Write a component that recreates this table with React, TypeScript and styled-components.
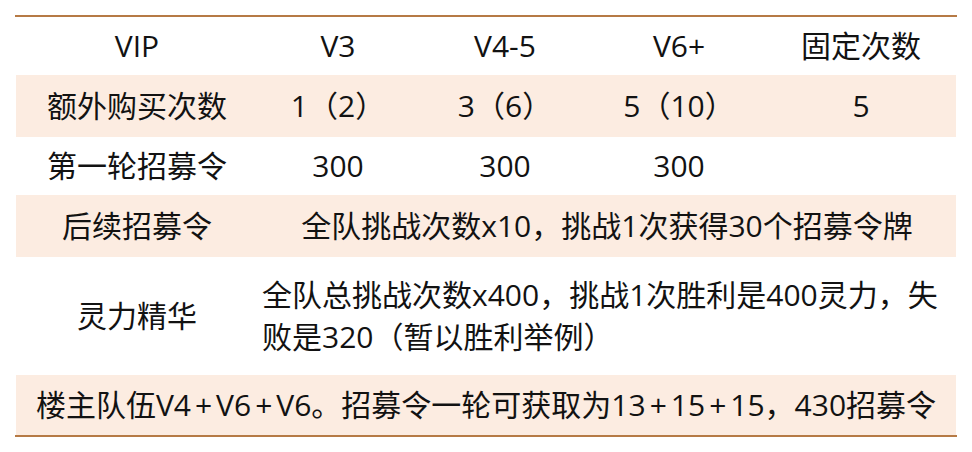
import React from "react";
import styled, { createGlobalStyle } from "styled-components";

const Global = createGlobalStyle`
  html, body { margin: 0; padding: 0; background: #ffffff; }
  body { font-family: "Open Sans", "Noto Sans CJK SC", sans-serif; }
`;

const Page = styled.div`
  width: 972px;
  height: 452px;
  padding: 15px 15px 0 15px;
  box-sizing: border-box;
`;

const Table = styled.div`
  width: 942px;
  border-top: 2px solid #b67a45;
  border-bottom: 2px solid #b67a45;
  padding: 0 1px;
  box-sizing: border-box;
  display: flex;
  flex-direction: column;
`;

const Row = styled.div<{ $shaded?: boolean; $h: number }>`
  display: grid;
  grid-template-columns: 242px 160px 174px 174px 190px;
  height: ${(p) => p.$h}px;
  background: ${(p) => (p.$shaded ? "#fcece1" : "#ffffff")};
`;

const Cell = styled.div<{ $span?: number; $left?: boolean }>`
  grid-column: span ${(p) => p.$span ?? 1};
  display: flex;
  align-items: center;
  justify-content: ${(p) => (p.$left ? "flex-start" : "center")};
  text-align: ${(p) => (p.$left ? "left" : "center")};
  padding: ${(p) => (p.$left ? "0 6px 0 4px" : "0")};
  font-size: 30px;
  line-height: 42px;
  color: #121212;
  white-space: ${(p) => (p.$left ? "normal" : "nowrap")};
`;

const Plus = styled.span`
  margin: 0 4px;
`;

export default function App() {
  return (
    <>
      <Global />
      <Page>
        <Table>
          <Row $h={58}>
            <Cell>VIP</Cell>
            <Cell>V3</Cell>
            <Cell>V4-5</Cell>
            <Cell>V6+</Cell>
            <Cell>固定次数</Cell>
          </Row>
          <Row $h={62} $shaded>
            <Cell>额外购买次数</Cell>
            <Cell>1（2）</Cell>
            <Cell>3（6）</Cell>
            <Cell>5（10）</Cell>
            <Cell>5</Cell>
          </Row>
          <Row $h={58}>
            <Cell>第一轮招募令</Cell>
            <Cell>300</Cell>
            <Cell>300</Cell>
            <Cell>300</Cell>
            <Cell></Cell>
          </Row>
          <Row $h={62} $shaded>
            <Cell>后续招募令</Cell>
            <Cell $span={4}>全队挑战次数x10，挑战1次获得30个招募令牌</Cell>
          </Row>
          <Row $h={118}>
            <Cell>灵力精华</Cell>
            <Cell $span={4} $left>
              <span>全队总挑战次数x400，挑战1次胜利是400灵力，失败是320（暂以胜利举例）</span>
            </Cell>
          </Row>
          <Row $h={60} $shaded>
            <Cell $span={5}>
              楼主队伍V4<Plus>+</Plus>V6<Plus>+</Plus>V6。招募令一轮可获取为13<Plus>+</Plus>15
              <Plus>+</Plus>15，430招募令
            </Cell>
          </Row>
        </Table>
      </Page>
    </>
  );
}
